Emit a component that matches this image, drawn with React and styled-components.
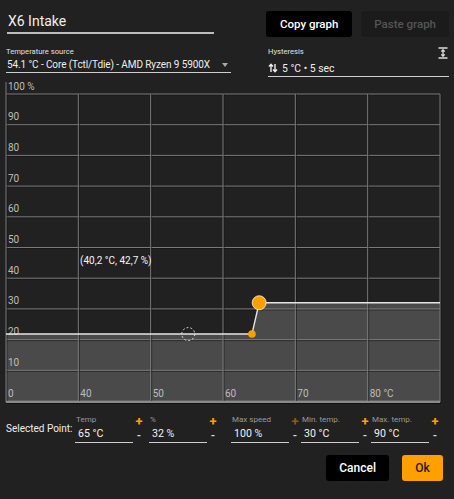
import styled, { createGlobalStyle } from "styled-components";

const GlobalStyle = createGlobalStyle`
  html, body {
    margin: 0;
    padding: 0;
    background: #212121;
  }
  body {
    font-family: Roboto, "Liberation Sans", sans-serif;
    color: #eee;
  }
`;

const X0 = 6;
const X1 = 440;
const Y0 = 96;
const Y1 = 403;
const colW = (X1 - X0) / 6;
const rowH = (Y1 - Y0) / 10;
const tx = (t) => X0 + ((t - 30) / 60) * (X1 - X0);
const ty = (p) => Y1 - (p / 100) * (Y1 - Y0);

const Graph = () => {
  const small = [tx(64), ty(21.8)];
  const big = [tx(65), ty(32)];
  const xLabels = ["0", "40", "50", "60", "70", "80 °C"];
  return (
    <ChartSvg width="454" height="330" viewBox="0 80 454 330">
      <polygon
        points={`${X0},${small[1]} ${small[0]},${small[1]} ${big[0]},${big[1]} ${X1},${big[1]} ${X1},${Y1} ${X0},${Y1}`}
        fill="#4a4a4a"
      />
      {Array.from({ length: 11 }, (_, j) => (
        <g key={"h" + j}>
          <line x1={X0} x2={X1} y1={Y0 + j * rowH + 1} y2={Y0 + j * rowH + 1} stroke="#111" strokeOpacity="0.6" />
          <line x1={X0} x2={X1} y1={Y0 + j * rowH} y2={Y0 + j * rowH} stroke="#7a7a7a" />
        </g>
      ))}
      {Array.from({ length: 7 }, (_, i) => (
        <g key={"v" + i}>
          <line x1={X0 + i * colW + 1} x2={X0 + i * colW + 1} y1={Y0} y2={Y1} stroke="#111" strokeOpacity="0.6" />
          <line x1={X0 + i * colW} x2={X0 + i * colW} y1={i === 0 ? 84 : Y0} y2={Y1 + 1} stroke="#7a7a7a" />
        </g>
      ))}
      <line x1={X0} x2={X1} y1={Y1 + 1} y2={Y1 + 1} stroke="#8a8a8a" strokeWidth="2" />
      <line x1={X0} x2={X1 + 1} y1={Y1 + 2.5} y2={Y1 + 2.5} stroke="#111" />
      {Array.from({ length: 10 }, (_, j) => (
        <AxisText key={"yl" + j} x={X0 + 2} y={Y0 + j * rowH - 4.5}>
          {j === 0 ? "100 %" : String(100 - j * 10)}
        </AxisText>
      ))}
      {xLabels.map((l, i) => (
        <AxisText key={"xl" + i} x={X0 + i * colW + 2} y={Y1 - 4.5}>
          {l}
        </AxisText>
      ))}
      <polyline
        points={`${X0},${small[1]} ${small[0]},${small[1]} ${big[0]},${big[1]} ${X1},${big[1]}`}
        fill="none"
        stroke="#e6e6e6"
        strokeWidth="1.4"
      />
      <circle cx={tx(55.2)} cy={small[1]} r="6.5" fill="none" stroke="#ddd" strokeDasharray="2 2" />
      <circle cx={small[0]} cy={small[1]} r="3.8" fill="#ffa000" />
      <circle cx={big[0]} cy={big[1]} r="7" fill="#ffa000" stroke="#f2f2f2" strokeWidth="0.8" />
      <TipText x="80" y="266">(40,2 °C, 42,7 %)</TipText>
    </ChartSvg>
  );
};

const SwapIcon = () => (
  <svg width="10" height="12" viewBox="0 0 10 12">
    <path d="M3 10V2.5M1 4.5L3 2.3L5 4.5" fill="none" stroke="#eee" strokeWidth="1.4" />
    <path d="M7 2V9.5M5 7.5L7 9.7L9 7.5" fill="none" stroke="#eee" strokeWidth="1.4" />
  </svg>
);

const HeightIcon = () => (
  <svg width="10" height="12" viewBox="0 0 10 12">
    <path d="M0.5 1H9.5M0.5 11H9.5" stroke="#ddd" strokeWidth="1.4" />
    <path d="M5 3V9M3.3 4.6L5 2.8L6.7 4.6M3.3 7.4L5 9.2L6.7 7.4" fill="none" stroke="#ddd" strokeWidth="1.3" />
  </svg>
);

const points = [
  { label: "Temp", value: "65 °C", ml: 0 },
  { label: "%", value: "32 %", ml: 4 },
  { label: "Max speed", value: "100 %", ml: 12, disabledPlus: true },
  { label: "Min. temp.", value: "30 °C", ml: 0 },
  { label: "Max. temp.", value: "90 °C", ml: 0 },
];

export default function App() {
  return (
    <Page>
      <GlobalStyle />
      <Header>
        <TitleInput>X6 Intake</TitleInput>
        <Spacer />
        <Button>Copy graph</Button>
        <Button $ghost>Paste graph</Button>
      </Header>

      <Sources>
        <Field $w={225}>
          <FieldLabel>Temperature source</FieldLabel>
          <SelectValue>
            <span>54.1 °C - Core (Tctl/Tdie) - AMD Ryzen 9 5900X</span>
            <Caret />
          </SelectValue>
        </Field>
        <Field $w={181}>
          <FieldLabel>
            Hysteresis
            <HeightIcon />
          </FieldLabel>
          <HystValue>
            <SwapIcon />
            <span>5 °C • 5 sec</span>
          </HystValue>
        </Field>
      </Sources>

      <Graph />

      <PointRow>
        <RowLabel>Selected Point:</RowLabel>
        {points.map((p) => (
          <PointGroup key={p.label} $ml={p.ml}>
            <PointField>
              <PointLabel>{p.label}</PointLabel>
              <PointValue>{p.value}</PointValue>
            </PointField>
            <Steppers>
              <Step $plus $disabled={p.disabledPlus}>+</Step>
              <Step>-</Step>
            </Steppers>
          </PointGroup>
        ))}
      </PointRow>

      <Actions>
        <ActionButton>Cancel</ActionButton>
        <ActionButton $primary>Ok</ActionButton>
      </Actions>
    </Page>
  );
}

const Page = styled.div`
  width: 454px;
  height: 499px;
  box-sizing: border-box;
  padding: 11px 5px 0 6px;
  display: flex;
  flex-direction: column;
  overflow: hidden;
`;

const Header = styled.div`
  display: flex;
  align-items: flex-start;
  height: 26px;
  gap: 9px;
`;

const TitleInput = styled.div`
  width: 206px;
  height: 21px;
  margin-left: 1px;
  padding-left: 1px;
  border-bottom: 2px solid #bdbdbd;
  font-size: 14px;
  line-height: 21px;
  color: #f0f0f0;
`;

const Spacer = styled.div`
  flex: 1;
`;

const Button = styled.div`
  height: 26px;
  padding: 0 ${(p) => (p.$ghost ? 13 : 14)}px;
  border-radius: 3px;
  display: flex;
  align-items: center;
  font-size: 11.5px;
  font-weight: 500;
  white-space: nowrap;
  background: ${(p) => (p.$ghost ? "#1b1b1b" : "#000")};
  color: ${(p) => (p.$ghost ? "#555" : "#fff")};
`;

const Sources = styled.div`
  display: flex;
  justify-content: space-between;
  margin-top: 9px;
`;

const Field = styled.div`
  width: ${(p) => p.$w}px;
  display: flex;
  flex-direction: column;
`;

const FieldLabel = styled.div`
  display: flex;
  justify-content: space-between;
  align-items: center;
  font-size: 7.6px;
  line-height: 10px;
  color: #e0e0e0;
  height: 10px;
  margin-top: 1px;
  white-space: nowrap;

  svg {
    margin-right: 1px;
    margin-top: 2px;
  }
`;

const SelectValue = styled.div`
  display: flex;
  justify-content: space-between;
  align-items: center;
  height: 15px;
  padding: 0 2px 0 1px;
  font-size: 10px;
  letter-spacing: -0.1px;
  white-space: nowrap;
  color: #eee;
  border-bottom: 1.5px solid #cfcfcf;
`;

const Caret = styled.span`
  width: 0;
  height: 0;
  border-left: 3.5px solid transparent;
  border-right: 3.5px solid transparent;
  border-top: 4px solid #aaa;
  margin-right: 1px;
`;

const HystValue = styled.div`
  display: flex;
  align-items: center;
  gap: 4px;
  height: 16px;
  margin-top: 3px;
  font-size: 10.4px;
  white-space: nowrap;
  color: #eee;
  border-bottom: 1.5px solid #cfcfcf;
`;

const ChartSvg = styled.svg`
  display: block;
  margin: 1px -5px 0 -6px;
  flex: none;
`;

const AxisText = styled.text`
  font-family: Roboto, "Liberation Sans", sans-serif;
  font-size: 10px;
  fill: #bdbdbd;
`;

const TipText = styled.text`
  font-family: Roboto, "Liberation Sans", sans-serif;
  font-size: 10px;
  fill: #f5f5f5;
`;

const PointRow = styled.div`
  display: flex;
  align-items: flex-start;
  margin-top: 7px;
  height: 32px;
`;

const RowLabel = styled.div`
  width: 69px;
  margin-top: 8px;
  font-size: 10px;
  white-space: nowrap;
  color: #eee;
`;

const PointGroup = styled.div`
  display: flex;
  width: 70px;
  margin-left: ${(p) => p.$ml}px;
`;

const PointField = styled.div`
  width: 58px;
  display: flex;
  flex-direction: column;
`;

const PointLabel = styled.div`
  font-size: 8px;
  line-height: 10px;
  color: #9a9a9a;
  padding-left: 1px;
  white-space: nowrap;
`;

const PointValue = styled.div`
  font-size: 10.6px;
  line-height: 14px;
  height: 15px;
  margin-top: 2px;
  padding-left: 3px;
  white-space: nowrap;
  color: #f2f2f2;
  border-bottom: 1.5px solid #cfcfcf;
`;

const Steppers = styled.div`
  width: 12px;
  display: flex;
  flex-direction: column;
  align-items: center;
`;

const Step = styled.div`
  font-size: ${(p) => (p.$plus ? 13 : 11)}px;
  font-weight: 700;
  line-height: 13px;
  height: 13px;
  margin-top: ${(p) => (p.$plus ? 0 : 1)}px;
  color: ${(p) => (p.$plus ? (p.$disabled ? "#8a5d10" : "#ffa000") : "#ddd")};
`;

const Actions = styled.div`
  display: flex;
  justify-content: flex-end;
  gap: 13px;
  margin-top: 8px;
  padding-right: 6px;
`;

const ActionButton = styled.div`
  height: 26px;
  padding: 0 ${(p) => (p.$primary ? 13 : 13)}px;
  min-width: ${(p) => (p.$primary ? 15 : 36)}px;
  border-radius: 3px;
  display: flex;
  align-items: center;
  justify-content: center;
  font-size: 12px;
  font-weight: 500;
  background: ${(p) => (p.$primary ? "#ffa000" : "#000")};
  color: ${(p) => (p.$primary ? "#1a1a1a" : "#fff")};
`;
